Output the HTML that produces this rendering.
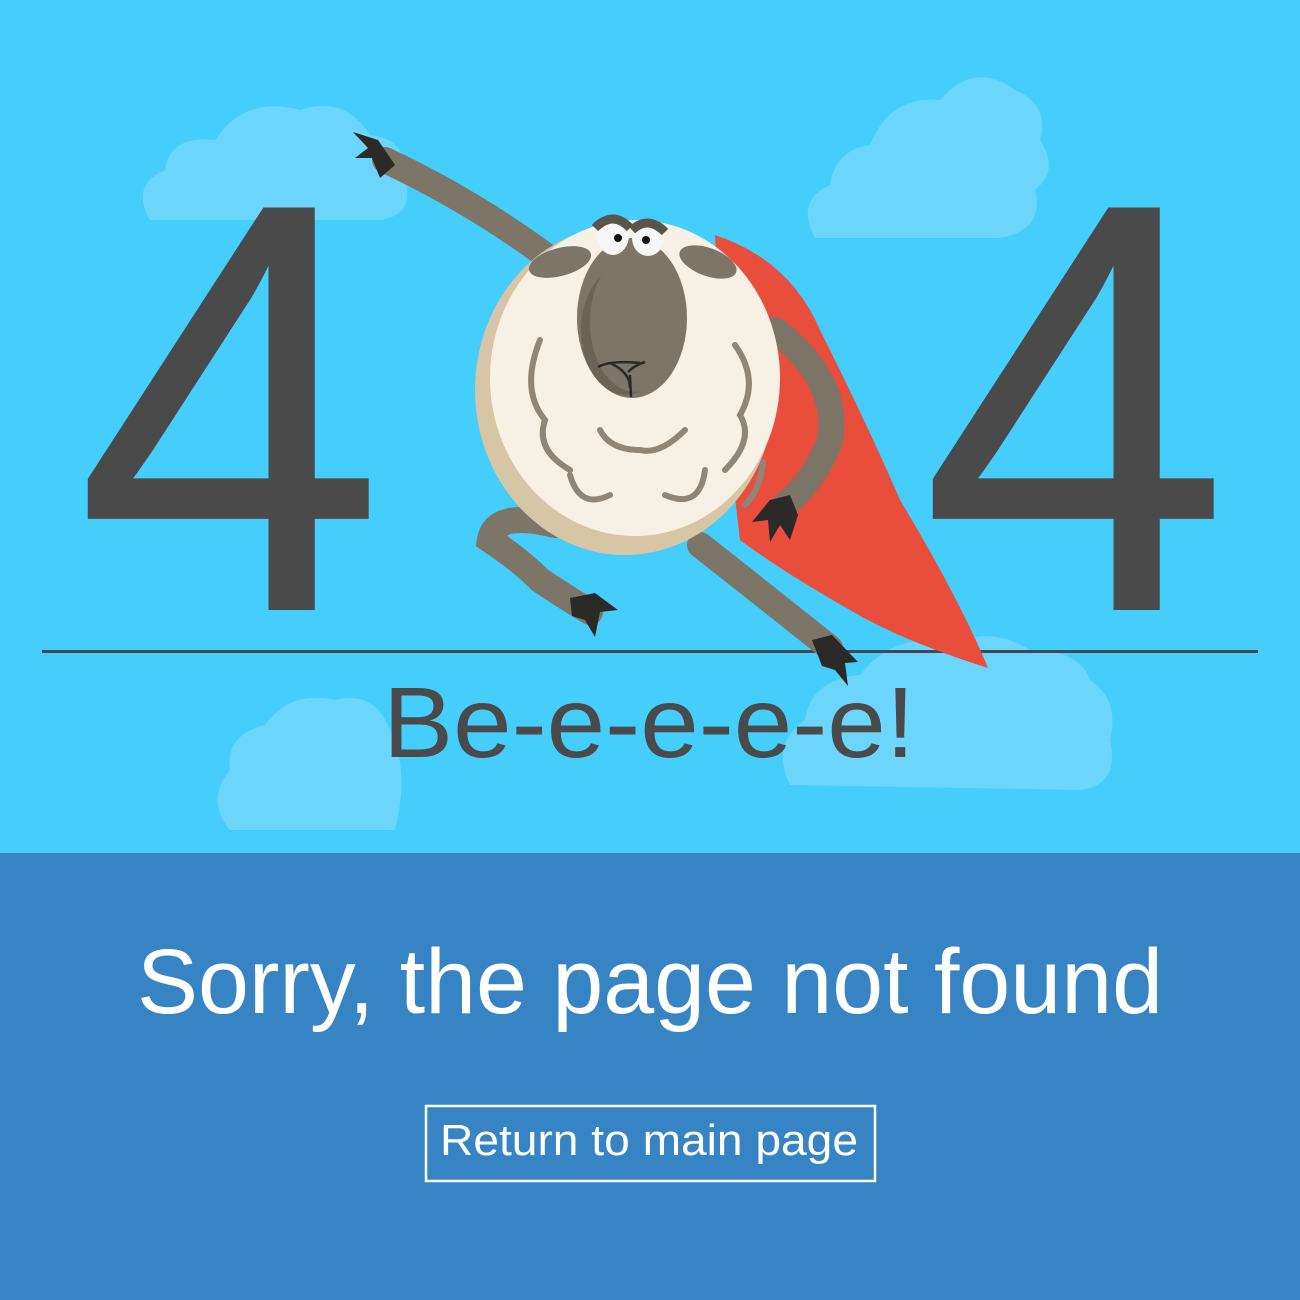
<!DOCTYPE html>
<html><head><meta charset="utf-8"><style>
html,body{margin:0;padding:0;width:1300px;height:1300px;overflow:hidden;background:#45cdfc}
svg{display:block}
</style></head><body>
<svg width="1300" height="1300" viewBox="0 0 1300 1300" xmlns="http://www.w3.org/2000/svg">
<rect x="0" y="0" width="1300" height="853" fill="#45cdfc"/>
<rect x="0" y="853" width="1300" height="447" fill="#3784c5"/>
<g fill="#6bd5fc">
<path d="M150 220 Q130 185 165 170 Q170 135 215 140 Q245 95 300 110 Q345 95 370 135 Q410 140 405 180 Q415 215 380 220 Z"/>
<path d="M815 238 Q795 200 830 185 Q835 150 870 145 Q890 95 940 100 Q975 60 1015 90 Q1050 105 1040 140 Q1060 170 1035 190 Q1045 230 1000 238 Z"/>
<path d="M230 830 Q205 800 230 770 Q225 735 265 725 Q290 690 335 700 Q375 690 390 730 Q410 770 395 830 Z"/>
<path d="M790 785 Q770 745 805 720 Q810 680 860 675 Q895 630 950 645 Q990 625 1030 650 Q1080 650 1090 680 Q1120 700 1110 740 Q1120 785 1080 790 Z"/>
</g>
<g fill="#4a4a4b" font-family="Liberation Sans, sans-serif">
<text x="75" y="610" font-size="585" textLength="310" lengthAdjust="spacingAndGlyphs">4</text>
<text x="920" y="610" font-size="585" textLength="310" lengthAdjust="spacingAndGlyphs">4</text>
</g>
<rect x="42" y="650" width="1216" height="3" fill="#3f4a52"/>
<path d="M715 235 Q790 260 820 330 Q870 430 900 500 Q960 600 988 668 Q900 640 850 610 Q780 570 740 540 Q725 420 715 235Z" fill="#e84e3b"/>
<g stroke="#7d7567" stroke-width="26" fill="none" stroke-linecap="round">
<path d="M545 255 Q470 200 385 160"/>
<path d="M775 330 Q840 380 830 440 Q815 480 785 505"/>
<path d="M555 525 Q495 510 490 540 Q520 560 540 580 Q570 600 590 612"/>
<path d="M700 545 Q770 600 830 648"/>
</g>
<g fill="#2c2a28">
<path d="M353 132 L378 140 L395 165 L380 178 L372 158 L355 158 L368 148Z"/>
<path d="M770 500 L790 495 L798 515 L790 540 L780 525 L770 542 L768 520 L752 522Z"/>
<path d="M570 598 L595 593 L618 610 L600 612 L595 637 L585 620 L572 616Z"/>
<path d="M812 640 L832 635 L858 662 L845 663 L848 686 L835 670 L822 666Z"/>
</g>
<ellipse cx="625" cy="390" rx="150" ry="165" fill="#d7c6a6"/>
<ellipse cx="635" cy="378" rx="145" ry="158" fill="#f6f0e5"/>
<g fill="none" stroke="#8f8677" stroke-width="6" stroke-linecap="round">
<path d="M540 340 Q520 390 545 420 Q535 450 570 470"/>
<path d="M735 345 Q760 380 740 415 Q755 440 725 470"/>
<path d="M600 430 Q610 450 640 450 Q660 455 685 430"/>
<path d="M570 475 Q580 510 610 495"/>
<path d="M665 495 Q700 510 705 470"/>
<path d="M763 462 Q760 490 745 505"/>
</g>
<ellipse cx="560" cy="262" rx="32" ry="14" fill="#7d7567" transform="rotate(-15 560 262)"/>
<ellipse cx="708" cy="262" rx="30" ry="14" fill="#7d7567" transform="rotate(20 708 262)"/>
<ellipse cx="632" cy="318" rx="55" ry="80" fill="#7d7567"/>
<ellipse cx="626" cy="330" rx="45" ry="65" fill="#6b6356"/>
<ellipse cx="635" cy="322" rx="45" ry="70" fill="#7d7567"/>
<ellipse cx="613" cy="235" rx="16" ry="20" fill="#f6f6f6"/>
<ellipse cx="648" cy="238" rx="16" ry="18" fill="#f6f6f6"/>
<path d="M595 228 Q613 210 630 228 M632 230 Q648 215 665 232" stroke="#5a544a" stroke-width="9" fill="none"/>
<circle cx="618" cy="238" r="4" fill="#111"/><circle cx="646" cy="240" r="4" fill="#111"/>
<path d="M598 367 Q610 360 640 363 M610 363 Q630 372 630 388 M628 372 Q635 365 645 362" stroke="#2c2a28" stroke-width="2.5" fill="none"/>
<line x1="630" y1="375" x2="631" y2="397" stroke="#2c2a28" stroke-width="2.5"/>
<g font-family="Liberation Sans, sans-serif">
<text x="383" y="757" font-size="100" fill="#4a4a4b" textLength="532" lengthAdjust="spacingAndGlyphs">Be-e-e-e-e!</text>
<text x="137" y="1013" font-size="92" fill="#ffffff" textLength="1026" lengthAdjust="spacingAndGlyphs">Sorry, the page not found</text>
<rect x="426" y="1106" width="449" height="75" fill="none" stroke="#ffffff" stroke-width="2.5"/>
<text x="440" y="1155" font-size="44" fill="#ffffff" textLength="418" lengthAdjust="spacingAndGlyphs">Return to main page</text>
</g>
</svg>
</body></html>
